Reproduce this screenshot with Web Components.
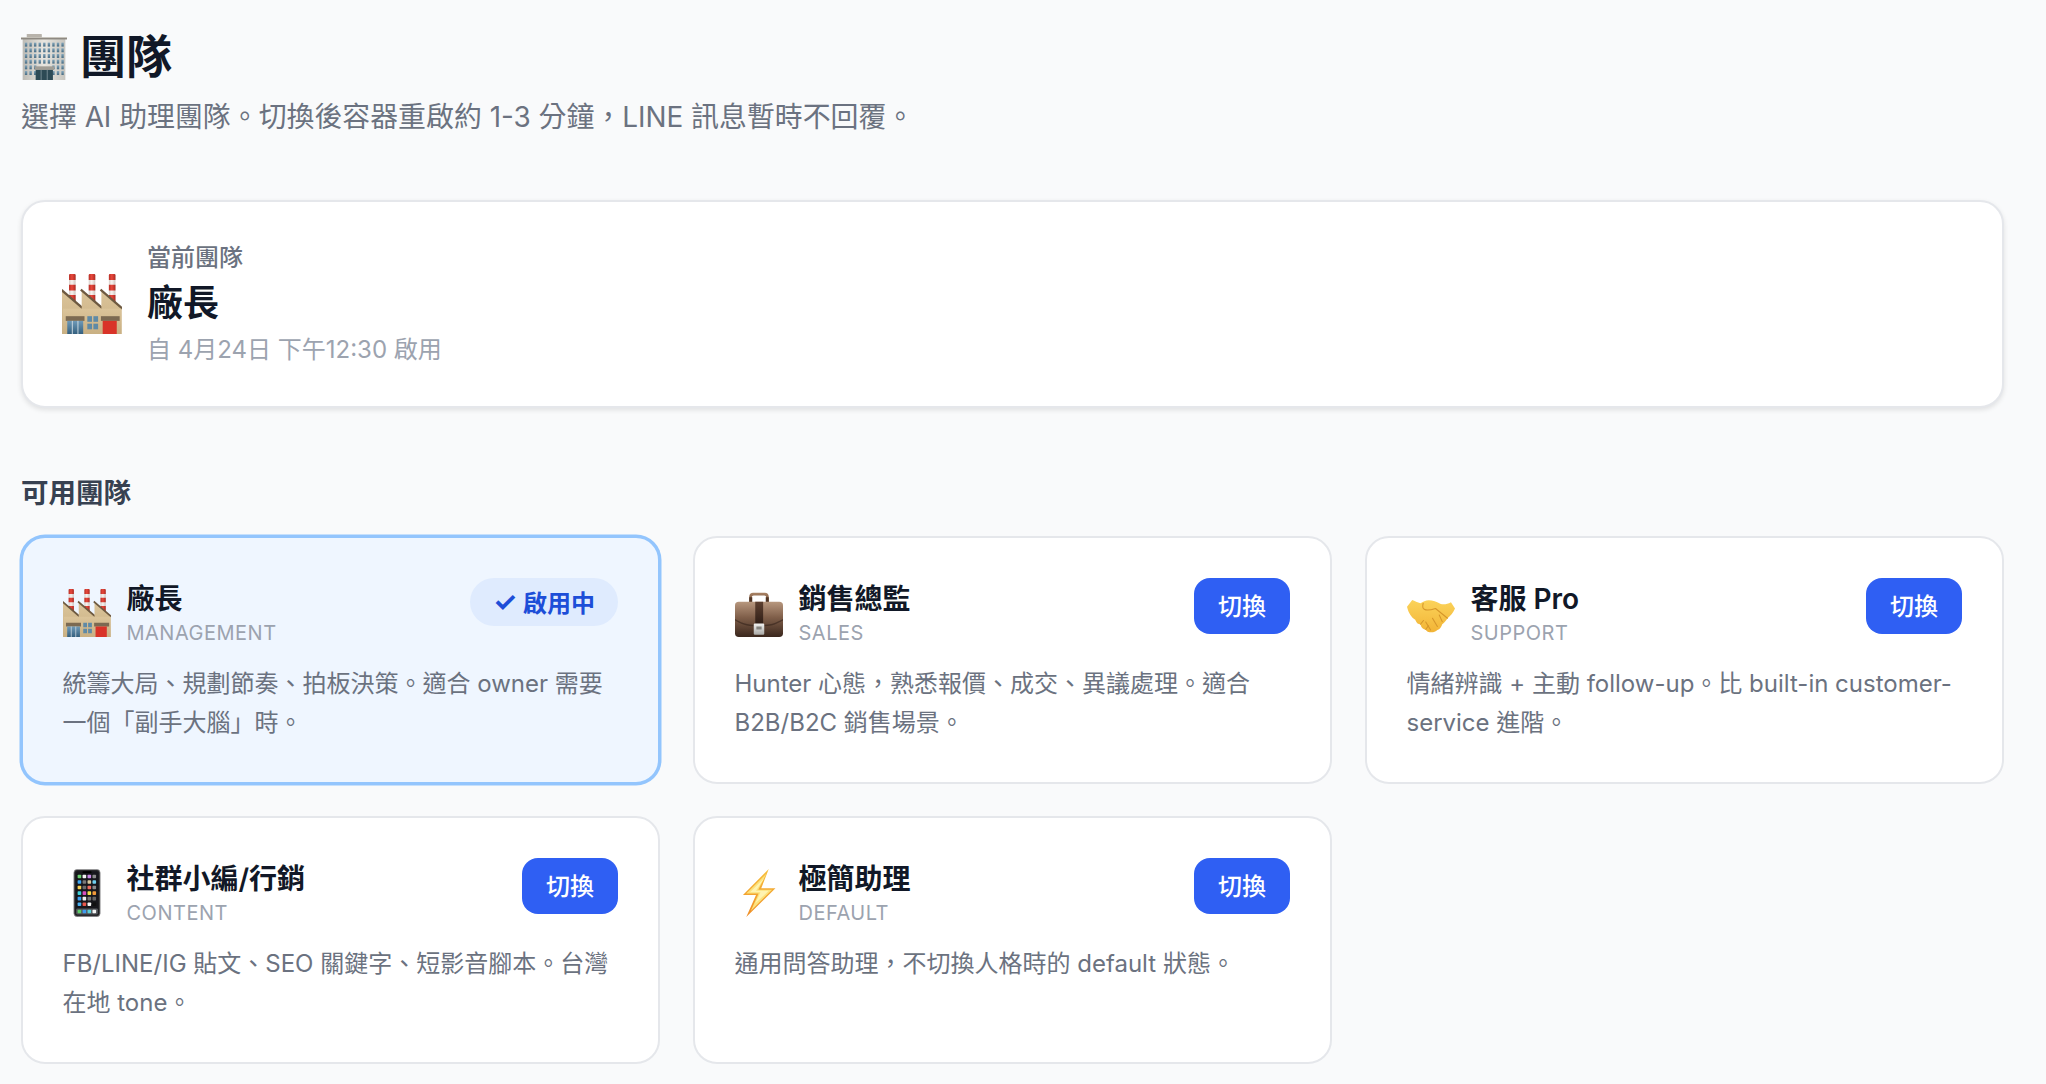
<!DOCTYPE html>
<html lang="zh-Hant">
<head>
<meta charset="utf-8">
<title>團隊</title>
<style>
html,body{margin:0;padding:0;background:#f9fafb;}
body{font-family:Inter,"Noto Sans CJK TC",sans-serif;color:#111827;}
</style>
</head>
<body>
<team-page>
  <page-header title-text="團隊" icon="office">選擇 AI 助理團隊。切換後容器重啟約 1-3 分鐘，LINE 訊息暫時不回覆。</page-header>
  <current-team icon="factory" name="廠長" since="自 4月24日 下午12:30 啟用"></current-team>
  <section-title>可用團隊</section-title>
  <team-grid>
    <team-card icon="factory" name="廠長" role="MANAGEMENT" active>統籌大局、規劃節奏、拍板決策。適合 owner 需要一個「副手大腦」時。</team-card>
    <team-card icon="briefcase" name="銷售總監" role="SALES">Hunter 心態，熟悉報價、成交、異議處理。適合 B2B/B2C 銷售場景。</team-card>
    <team-card icon="handshake" name="客服 Pro" role="SUPPORT">情緒辨識 + 主動 follow-up。比 built-in customer-service 進階。</team-card>
    <team-card icon="phone" name="社群小編/行銷" role="CONTENT">FB/LINE/IG 貼文、SEO 關鍵字、短影音腳本。台灣在地 tone。</team-card>
    <team-card icon="bolt" name="極簡助理" role="DEFAULT">通用問答助理，不切換人格時的 default 狀態。</team-card>
  </team-grid>
</team-page>
<script>
function officeSvg(){
  let w='';
  for(let r=0;r<6;r++){
    for(let c=0;c<9;c++){
      if(r>=4&&c>=3&&c<=5) continue;
      w+=`<rect x="${5.4+c*6.35}" y="${12+r*7.9}" width="3.3" height="5.5" fill="url(#ofw)"/>`;
    }
  }
  return `<svg viewBox="0 0 64 64"><defs>
  <linearGradient id="ofb" x1="0" x2="1"><stop offset="0" stop-color="#bdbbb5"/><stop offset=".5" stop-color="#e8e6e0"/><stop offset="1" stop-color="#c6c4be"/></linearGradient>
  <linearGradient id="ofw" x1="0" y1="0" x2="0" y2="1"><stop offset="0" stop-color="#86a8bd"/><stop offset="1" stop-color="#456a82"/></linearGradient></defs>
  <rect x="8" y="0" width="21" height="6" rx=".8" fill="#b8b3ab"/>
  <rect x="2.3" y="7" width="59.4" height="57" fill="url(#ofb)"/>
  <rect x="0" y="4.600" width="64" height="3" fill="#8d8880"/>
  <rect x="0" y="4.600" width="64" height="1" fill="#d4d0c8"/>
  ${w}
  <rect x="19" y="45" width="27" height="5" fill="#a09d95"/>
  <rect x="20.400" y="50" width="24" height="14" fill="#2d4a55"/>
  <path d="M28 50v14M36.500 50v14" stroke="#8fa3aa" stroke-width="1"/>
  </svg>`;
}
function factorySvg(){
  const chim=x=>`<rect x="${x}" y="0" width="7" height="30" rx="1.2" fill="url(#fac)"/>
   <path d="M${x} 1.2a1.2 1.2 0 0 1 1.2-1.200h4.600a1.200 1.200 0 0 1 1.200 1.200V6.500H${x}zM${x} 11.500h7v6H${x}zM${x} 22.500h7v7.500H${x}z" fill="url(#far)"/>`;
  const tooth=x=>`<path d="M${x} 18 L${x+21.500} 36 V64 H${x}Z" fill="url(#fab)"/><path d="M${x} 17.500 L${x+22} 36.500" stroke="#6e5a41" stroke-width="2.400" stroke-linecap="square"/>`;
  return `<svg viewBox="0 0 64 64"><defs>
  <linearGradient id="fab" x1="0" y1="0" x2="0" y2="1"><stop offset="0" stop-color="#dbc49a"/><stop offset="1" stop-color="#c9b083"/></linearGradient>
  <linearGradient id="fad" x1="0" y1="0" x2="0" y2="1"><stop offset="0" stop-color="#6f9ab8"/><stop offset="1" stop-color="#34607f"/></linearGradient>
  <linearGradient id="fac" x1="0" x2="1"><stop offset="0" stop-color="#d9cfc9"/><stop offset=".45" stop-color="#f7f3f0"/><stop offset="1" stop-color="#cfc4be"/></linearGradient>
  <linearGradient id="far" x1="0" x2="1"><stop offset="0" stop-color="#b92f27"/><stop offset=".45" stop-color="#e8483c"/><stop offset="1" stop-color="#ad2a23"/></linearGradient>
  </defs>
  ${chim(7.5)}${chim(28.5)}${chim(50)}
  ${tooth(0)}${tooth(21)}${tooth(42)}
  <rect x="1" y="37" width="62.500" height="27" fill="url(#fab)"/>
  <rect x="4" y="45" width="20" height="5" fill="#7c6a52"/>
  <rect x="5.600" y="50" width="17" height="14" fill="url(#fad)"/>
  <path d="M11 50V64M17 50V64" stroke="#dfe6ea" stroke-width=".9"/>
  <rect x="41.500" y="45" width="20" height="5" fill="#7c6a52"/>
  <rect x="43.400" y="50" width="15" height="14" fill="#d93328"/>
  <g fill="#5f8aa6"><rect x="27" y="45" width="5" height="6"/><rect x="33.500" y="45" width="5" height="6"/><rect x="27" y="53" width="5" height="6"/><rect x="33.500" y="53" width="5" height="6"/></g>
  </svg>`;
}
function briefcaseSvg(){
  return `<svg viewBox="0 0 64 64"><defs>
  <linearGradient id="brb" x1="0" y1="0" x2="0" y2="1"><stop offset="0" stop-color="#b7977e"/><stop offset=".45" stop-color="#7f5e49"/><stop offset="1" stop-color="#3a271d"/></linearGradient>
  <linearGradient id="brh" x1="0" y1="0" x2="0" y2="1"><stop offset="0" stop-color="#a98365"/><stop offset="1" stop-color="#6d4b34"/></linearGradient>
  <linearGradient id="brs" x1="0" y1="0" x2="0" y2="1"><stop offset="0" stop-color="#5d4030"/><stop offset="1" stop-color="#2c1c15"/></linearGradient>
  <linearGradient id="brm" x1="0" y1="0" x2="0" y2="1"><stop offset="0" stop-color="#f2f2f0"/><stop offset="1" stop-color="#a9a9a6"/></linearGradient></defs>
  <path d="M19 18v-8c0-3 2-5 5-5h16c3 0 5 2 5 5v8h-3.500v-7c0-1.500-.8-2.500-2.500-2.500H25c-1.700 0-2.500 1-2.500 2.500v7z" fill="url(#brh)"/>
  <rect x="19" y="11" width="4" height="7" fill="#4f3424"/><rect x="41" y="11" width="4" height="7" fill="#4f3424"/>
  <rect x="0" y="17" width="64" height="47" rx="5" fill="url(#brb)"/>
  <path d="M0 40c12 7 20 8 32 8s20-1 32-8v2c-12 7-20 8-32 8S12 49 0 42z" fill="#2f1f17" opacity=".55"/>
  <rect x="27" y="17" width="10.500" height="32" fill="url(#brs)"/>
  <rect x="25" y="46" width="14" height="15" rx="1.500" fill="url(#brm)"/>
  <rect x="28.500" y="50" width="7" height="4" fill="#83837f"/>
  </svg>`;
}
function handshakeSvg(){
  return `<svg viewBox="0 0 64 64"><defs>
  <linearGradient id="hs" x1="0" y1="0" x2="0" y2="1"><stop offset="0" stop-color="#fbd35a"/><stop offset="1" stop-color="#f2b436"/></linearGradient></defs>
  <path d="M7 14.700 L0 23.600 C2 32 6 38 11 41 C13 46 15 47 18 47 C19 52 22 54 25 54 C26 57 29 58 31.500 57.500 C34 58 38 57 40.500 54.500 C44 54 46 50 47 47 C50 45 52 42 54 39 C58 36 62 31 64 26 L58.600 17.500 C54 20 50 21 45 20 C40 17 34 15 29 15 C25 15 21 17 18 19 C14 18 10 16 7 14.700Z" fill="url(#hs)"/>
  <g fill="none" stroke="#d6962a" stroke-width="1.400" stroke-linecap="round" stroke-linejoin="round">
  <path d="M21.600 19 C20.500 23 21 26 23 27 C26 29 32 28 38 26 L54 39"/>
  <path d="M43 34.700 L47 43.500"/><path d="M34 39 L40.500 50"/><path d="M25 44 L31.500 54.700"/>
  <path d="M18 47 L22 42 M25 54 L28.500 49"/></g>
  </svg>`;
}
function phoneSvg(){
  const rows=[['#6bd06f','#f2f2f2','#c98ae8','#8c8c8c'],['#3fa9f5','#7a7a7a','#d8c9a0','#6fd0f0'],['#f7d154','#6a6a6a','#ee6a5e','#8a8a8a'],['#3fd0d8','#d84fc0','#f4e04d','#f09a3a'],['#3fa0f0','#f0f0f0','#777','#666'],['#4ab0f0','#e8584c','#f5f5f5','#111']];
  let g='';
  rows.forEach((row,r)=>row.forEach((col,c)=>{
    g+=`<rect x="${19.500+c*6.600}" y="${7.500+r*7.400}" width="4.800" height="4.800" rx="1" fill="${col}"/>`;
  }));
  const dock=['#5fcf6a','#3e9bf0','#5ad0d8','#f4f4f4'];
  dock.forEach((d,c)=>g+=`<rect x="${19.500+c*6.600}" y="54.300" width="4.800" height="4.800" rx="1" fill="${d}"/>`);
  return `<svg viewBox="0 0 64 64">
  <rect x="14.500" y="0.500" width="35" height="63" rx="4.500" fill="#2a2a2c" stroke="#9a9a9c" stroke-width="1"/>
  <rect x="16.500" y="3" width="31" height="58" rx="2.500" fill="#17171c"/>
  <rect x="17.500" y="52.500" width="29" height="8" rx="1.500" fill="#55585c"/>
  <rect x="26" y="3" width="12" height="2.500" rx="1" fill="#000"/>
  ${g}</svg>`;
}
function boltSvg(){
  return `<svg viewBox="0 0 64 64"><defs>
  <linearGradient id="bo" x1="0" y1="0" x2="0" y2="1"><stop offset="0" stop-color="#f7bf3c"/><stop offset="1" stop-color="#ee8c26"/></linearGradient></defs>
  <path d="M45 0 L10.600 34.500 H28 L15 64 L54 25.600 H35Z" fill="url(#bo)"/>
  <path d="M42 6 L15 32.500 H31.500 L21 56 L49.500 27.500 H31Z" fill="#fce27c"/>
  <path d="M39 12 L20 31 H34 L27 46 L45 29 H28Z" fill="#fff3b0"/>
  </svg>`;
}
const ICONS={office:officeSvg,factory:factorySvg,briefcase:briefcaseSvg,handshake:handshakeSvg,phone:phoneSvg,bolt:boltSvg};
let uid=0;
class EmojiIcon extends HTMLElement{
  connectedCallback(){
    if(this.shadowRoot) return;
    const s=this.attachShadow({mode:'open'});
    const n=++uid;
    const svg=ICONS[this.getAttribute('name')]().replace(/id="(\w+)"/g,`id="$1${n}"`).replace(/url\(#(\w+)\)/g,`url(#$1${n})`);
    s.innerHTML=`<style>:host{display:block;flex:none;line-height:0}svg{display:block;width:100%;height:100%}</style>${svg}`;
  }
}
class TeamPage extends HTMLElement{
  constructor(){super();this.attachShadow({mode:'open'}).innerHTML=`<style>:host{display:flex;flex-direction:column;box-sizing:border-box;width:2046px;height:1084px;padding:22px 42px 0 21px;overflow:hidden;background:#f9fafb;font-family:Inter,"Noto Sans CJK TC",sans-serif}</style><slot></slot>`;}
}
class PageHeader extends HTMLElement{
  connectedCallback(){
    if(this.shadowRoot) return;
    this.attachShadow({mode:'open'}).innerHTML=`<style>
    :host{display:block;margin-bottom:63px}
    h1{display:flex;align-items:center;gap:13px;margin:0;font-size:46px;line-height:68px;font-weight:700;color:#111827}
    emoji-icon{width:46px;height:46px;margin-top:2px}
    p{margin:6.500px 0 0;font-size:27.900px;line-height:40px;color:#6b7280}
    </style><h1><emoji-icon name="${this.getAttribute('icon')}"></emoji-icon><span>${this.getAttribute('title-text')}</span></h1><p><slot></slot></p>`;
  }
}
class CurrentTeam extends HTMLElement{
  connectedCallback(){
    if(this.shadowRoot) return;
    this.attachShadow({mode:'open'}).innerHTML=`<style>
    :host{display:flex;align-items:center;gap:25px;box-sizing:border-box;height:208px;padding:1px 39px 0;background:#fff;border:2px solid #e5e7eb;border-radius:24px;box-shadow:0 2px 5px rgba(0,0,0,.1);margin-bottom:65px}
    emoji-icon{width:60px;height:60px}
    .lbl{font-size:24px;line-height:36px;color:#6b7280;font-weight:500}
    .nm{font-size:36px;line-height:54px;font-weight:700;color:#111827}
    .dt{font-size:24px;line-height:36px;color:#9ca3af;margin-top:2px}
    </style><emoji-icon name="${this.getAttribute('icon')}"></emoji-icon><div><div class="lbl">當前團隊</div><div class="nm">${this.getAttribute('name')}</div><div class="dt">${this.getAttribute('since')}</div></div>`;
  }
}
class SectionTitle extends HTMLElement{
  constructor(){super();this.attachShadow({mode:'open'}).innerHTML=`<style>:host{display:block;font-size:27.500px;line-height:40px;font-weight:600;color:#374151;margin-bottom:23px}</style><slot></slot>`;}
}
class TeamGrid extends HTMLElement{
  constructor(){super();this.attachShadow({mode:'open'}).innerHTML=`<style>:host{display:grid;grid-template-columns:repeat(3,1fr);grid-auto-rows:248px;gap:32px 33px}</style><slot></slot>`;}
}
class TeamCard extends HTMLElement{
  connectedCallback(){
    if(this.shadowRoot) return;
    const active=this.hasAttribute('active');
    const action=active?`<span class="badge"><span class="ck">✓</span> 啟用中</span>`:`<button type="button">切換</button>`;
    this.attachShadow({mode:'open'}).innerHTML=`<style>
    :host{display:block;box-sizing:border-box;padding:41px 40px 0 39.500px;background:#fff;border:2px solid #e5e7eb;border-radius:24px;min-width:0}
    :host([active]){background:#eff6ff;border-color:#93c5fd;box-shadow:0 0 0 1.500px #93c5fd}
    .top{display:flex;justify-content:space-between;align-items:flex-start;height:68px;margin-bottom:17px}
    .id{display:flex;align-items:center;gap:16px}
    emoji-icon{width:48px;height:48px;margin-top:0}
    .nm{font-size:28px;line-height:40px;font-weight:600;color:#111827}
    .rl{font-size:20px;line-height:28px;letter-spacing:.5px;color:#9ca3af}
    button{all:unset;box-sizing:border-box;width:96px;height:56px;margin-top:-1px;text-align:center;line-height:58px;font-size:24px;font-weight:500;color:#fff;background:#2f5ff3;border-radius:16px;font-family:inherit}
    .badge{display:inline-flex;align-items:center;justify-content:center;gap:0;white-space:pre;box-sizing:border-box;width:148px;height:48px;margin-top:-1px;border-radius:24px;background:#dfebfe;color:#1d4ed8;font-size:24px;font-weight:600}
    .ck{font-size:27px;font-weight:700;line-height:1}
    .desc{font-size:24px;line-height:39px;color:#6b7280}
    </style><div class="top"><div class="id"><emoji-icon name="${this.getAttribute('icon')}"></emoji-icon><div><div class="nm">${this.getAttribute('name')}</div><div class="rl">${this.getAttribute('role')}</div></div></div>${action}</div><div class="desc"><slot></slot></div>`;
  }
}
customElements.define('emoji-icon',EmojiIcon);
customElements.define('team-page',TeamPage);
customElements.define('page-header',PageHeader);
customElements.define('current-team',CurrentTeam);
customElements.define('section-title',SectionTitle);
customElements.define('team-grid',TeamGrid);
customElements.define('team-card',TeamCard);
</script>
</body>
</html>
